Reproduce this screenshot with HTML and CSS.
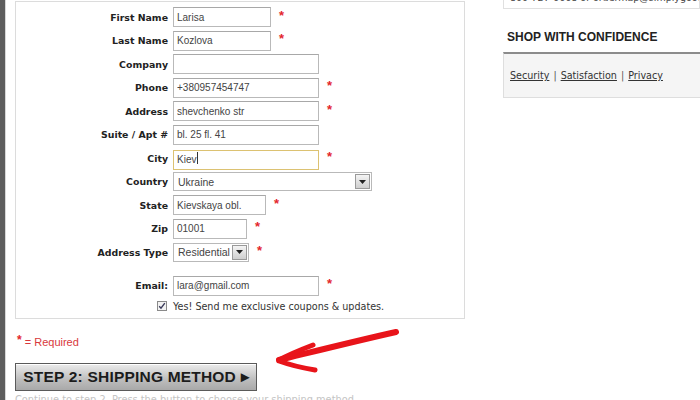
FILE: index.html
```html
<!DOCTYPE html>
<html>
  <head>
    <meta charset="UTF-8">
    <title>Checkout - Billing Address</title>
    <link rel="stylesheet" href="styles.css">
  </head>
  <body>
    <div id="page">
      <div class="edge"></div>

      <div id="main">
        <form class="billing">
          <div class="row">
            <label>First Name</label>
            <input class="w-short" type="text" value="Larisa">
            <span class="req">*</span>
          </div>
          <div class="row">
            <label>Last Name</label>
            <input class="w-short" type="text" value="Kozlova">
            <span class="req">*</span>
          </div>
          <div class="row">
            <label>Company</label>
            <input class="w-wide" type="text" value="">
          </div>
          <div class="row">
            <label>Phone</label>
            <input class="w-wide" type="text" value="+380957454747">
            <span class="req">*</span>
          </div>
          <div class="row">
            <label>Address</label>
            <input class="w-wide" type="text" value="shevchenko str">
            <span class="req">*</span>
          </div>
          <div class="row">
            <label>Suite / Apt #</label>
            <input class="w-wide" type="text" value="bl. 25 fl. 41">
          </div>
          <div class="row">
            <label>City</label>
            <span class="focus-wrap">
              <input class="w-wide focused" type="text" value="Kiev">
              <span class="caret"></span>
            </span>
            <span class="req">*</span>
          </div>
          <div class="row">
            <label>Country</label>
            <div class="select w-country">
              <span class="select-value">Ukraine</span>
              <span class="select-btn"><svg width="7" height="4" viewBox="0 0 7 4"><path d="M0 0h7L3.5 4z" fill="#222"/></svg></span>
            </div>
          </div>
          <div class="row">
            <label>State</label>
            <input class="w-state" type="text" value="Kievskaya obl.">
            <span class="req">*</span>
          </div>
          <div class="row">
            <label>Zip</label>
            <input class="w-zip" type="text" value="01001">
            <span class="req">*</span>
          </div>
          <div class="row">
            <label>Address Type</label>
            <div class="select w-type">
              <span class="select-value">Residential</span>
              <span class="select-btn"><svg width="7" height="4" viewBox="0 0 7 4"><path d="M0 0h7L3.5 4z" fill="#222"/></svg></span>
            </div>
            <span class="req">*</span>
          </div>

          <div class="row email">
            <label>Email:</label>
            <input class="w-wide" type="text" value="lara@gmail.com">
            <span class="req">*</span>
          </div>
          <div class="row optin">
            <span class="check"><svg width="8" height="8" viewBox="0 0 8 8"><path d="M1.2 4.2l1.8 2 3.8-5" fill="none" stroke="#3a3a5a" stroke-width="1.4"/></svg></span>
            <span class="optin-text">Yes! Send me exclusive coupons &amp; updates.</span>
          </div>
        </form>

        <p class="required-note"><span class="req">*</span> = Required</p>

        <button class="step-btn" type="button">STEP 2: SHIPPING METHOD &#9656;</button>
        <p class="hint">Continue to step 2. Press the button to choose your shipping method.</p>
      </div>

      <div id="sidebar">
        <div class="contact-box">800-727-6668 or ordermap@simplygoods.com</div>
        <h3>SHOP WITH CONFIDENCE</h3>
        <div class="confidence-box">
          <a href="#">Security</a> | <a href="#">Satisfaction</a> | <a href="#">Privacy</a>
        </div>
      </div>
    </div>

    <!-- hand drawn arrow pointing at the button -->
    <svg class="arrow" width="700" height="400" viewBox="0 0 700 400">
      <path d="M396 332 C 360 340, 320 350, 279 360" fill="none" stroke="#e8141a" stroke-width="6" stroke-linecap="round"/>
      <path d="M313 345 C 300 350, 288 355, 279 360" fill="none" stroke="#e8141a" stroke-width="5" stroke-linecap="round"/>
      <path d="M279 361 C 290 365, 303 368, 315 370" fill="none" stroke="#e8141a" stroke-width="5" stroke-linecap="round"/>
    </svg>
  </body>
</html>
```

FILE: styles.css
```css
body {
  margin: 0;
  background: #fff;
  color: #222;
  font-family: 'DejaVu Sans', Verdana, sans-serif;
  overflow: hidden;
}
#page {
  display: flex;
  align-items: flex-start;
  height: 400px;
}
.edge {
  width: 5px;
  height: 400px;
  background: #5e5e5e;
  border-right: 1px solid #d8d8d8;
  flex: none;
}

/* main column */
#main {
  width: 450px;
  margin-left: 9px;
  flex: none;
}
.billing {
  margin: 0;
  margin-top: 1px;
  border: 1px solid #dcdcdc;
  padding: 5px 0 5px 0;
  display: flex;
  flex-direction: column;
  gap: 3.5px;
}
.row {
  display: flex;
  align-items: center;
  height: 20px;
}
.row label {
  width: 152px;
  margin-right: 5px;
  text-align: right;
  font-weight: bold;
  font-size: 9.4px;
  color: #222;
}
.row input {
  box-sizing: border-box;
  height: 20px;
  margin: 0;
  padding: 0 3px;
  border: 1px solid #b9b9b9;
  border-top-color: #a8a8a8;
  font-family: 'Liberation Sans', Arial, sans-serif;
  font-size: 10px;
  color: #444;
  background: #fff;
  outline: none;
}
.w-short { width: 98px; }
.w-wide { width: 146px; }
.w-state { width: 93px; }
.w-zip { width: 74px; }
.w-country { width: 199px; }
.w-type { width: 76px; }

.req {
  color: #e3262c;
  font-family: 'Liberation Sans', Arial, sans-serif;
  font-weight: bold;
  font-size: 13px;
  margin-left: 8px;
  line-height: 1;
  position: relative;
  top: -2px;
}
.focus-wrap {
  position: relative;
  display: inline-block;
  height: 20px;
}
.row input.focused {
  border-color: #dcc272;
}
.caret {
  position: absolute;
  left: 24px;
  top: 4px;
  width: 1px;
  height: 12px;
  background: #333;
}

.select {
  box-sizing: border-box;
  height: 19px;
  border: 1px solid #b9b9b9;
  display: flex;
  align-items: center;
  justify-content: space-between;
  padding: 0 1px 0 4px;
  font-family: 'Liberation Sans', Arial, sans-serif;
  font-size: 10.5px;
  color: #444;
}
.select-btn {
  box-sizing: border-box;
  width: 15px;
  height: 15px;
  border: 1px solid #9a9a9a;
  background: linear-gradient(#f4f4f4, #cfcfcf);
  display: flex;
  align-items: center;
  justify-content: center;
}

.row.email {
  margin-top: 10px;
}
.row.optin {
  height: 14px;
  padding-left: 141px;
}
.check {
  box-sizing: border-box;
  width: 10px;
  height: 10px;
  border: 1px solid #8a8a8a;
  background: #f2f2f2;
  display: flex;
  align-items: center;
  justify-content: center;
  margin-right: 6px;
}
.optin-text {
  font-size: 9.6px;
  color: #333;
}

.required-note {
  margin: 16px 0 0 2px;
  font-family: 'Liberation Sans', Arial, sans-serif;
  font-size: 11px;
  color: #d8383c;
  line-height: 14px;
}
.required-note .req {
  margin-left: 0;
  font-size: 12px;
}

.step-btn {
  display: block;
  margin-top: 14px;
  width: 242px;
  height: 28px;
  padding: 0;
  border: 1px solid #5a5a5a;
  background: linear-gradient(#ececec, #bdbdbd 60%, #a9a9a9);
  box-shadow: inset 0 1px 0 #fff;
  font-family: 'Liberation Sans', Arial, sans-serif;
  font-weight: bold;
  font-size: 15.5px;
  color: #1c1c1c;
  text-align: center;
  letter-spacing: 0.2px;
}
.hint {
  margin: 3px 0 0 0;
  font-size: 9.8px;
  color: #c4c4c4;
  white-space: nowrap;
}

/* right column */
#sidebar {
  margin-left: 38px;
  flex: 1;
  min-width: 0;
}
.contact-box {
  margin-top: -8px;
  height: 16px;
  border: 1px solid #e0e0e0;
  border-top: none;
  font-size: 9.5px;
  color: #444;
  padding: 0 0 0 6px;
  white-space: nowrap;
  overflow: hidden;
}
#sidebar h3 {
  margin: 21px 0 0 4px;
  font-family: 'Liberation Sans', Arial, sans-serif;
  font-size: 12px;
  color: #222;
  line-height: 14px;
}
.confidence-box {
  margin-top: 8px;
  height: 43px;
  border-top: 2px solid #8c8c8c;
  border-left: 1px solid #dedede;
  border-bottom: 1px solid #dedede;
  background: #f5f5f5;
  padding-left: 6px;
  font-size: 9.6px;
  color: #555;
  display: flex;
  align-items: center;
  gap: 4px;
}
.confidence-box a {
  color: #333;
}

.arrow {
  position: absolute;
  left: 0;
  top: 0;
  pointer-events: none;
}
```
